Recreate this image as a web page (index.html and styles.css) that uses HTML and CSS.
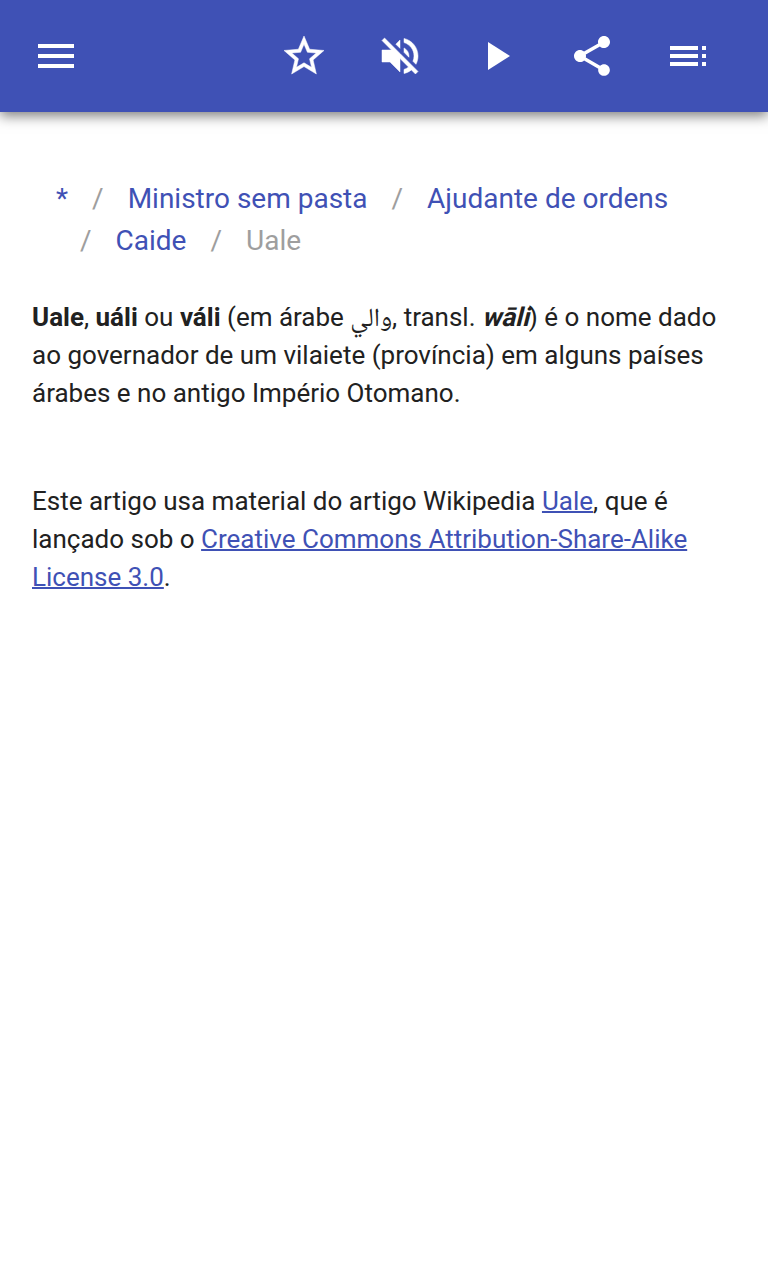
FILE: index.html
```html
<!DOCTYPE html>
<html lang="pt">
<head>
  <meta charset="UTF-8" />
  <title>Uale</title>
  <link rel="stylesheet" href="styles.css">
</head>
<body>
  <header class="toolbar">
    <button class="icon-btn" aria-label="Menu">
      <svg viewBox="0 0 24 24"><path d="M3 18h18v-2H3v2zm0-5h18v-2H3v2zm0-7v2h18V6H3z"/></svg>
    </button>
    <span class="spacer"></span>
    <button class="icon-btn heavy" aria-label="Favorito">
      <svg viewBox="0 0 24 24"><path d="M22 9.24l-7.19-.62L12 2 9.19 8.63 2 9.24l5.46 4.73L5.82 21 12 17.27 18.18 21l-1.63-7.03L22 9.24zM12 15.4l-3.76 2.27 1-4.28-3.32-2.88 4.38-.38L12 6.1l1.71 4.04 4.38.38-3.32 2.88 1 4.28L12 15.4z"/></svg>
    </button>
    <button class="icon-btn heavy" aria-label="Som">
      <svg viewBox="0 0 24 24"><path d="M16.5 12c0-1.77-1.02-3.29-2.5-4.03v2.21l2.45 2.45c.03-.2.05-.41.05-.63zm2.5 0c0 .94-.2 1.82-.54 2.64l1.51 1.51C20.63 14.91 21 13.5 21 12c0-4.28-2.99-7.86-7-8.77v2.06c2.89.86 5 3.54 5 6.71zM4.27 3L3 4.27 7.73 9H3v6h4l5 5v-6.73l4.25 4.25c-.67.52-1.42.93-2.25 1.18v2.06c1.38-.31 2.63-.95 3.69-1.81L19.73 21 21 19.73l-9-9L4.27 3zM12 4L9.91 6.09 12 8.18V4z"/></svg>
    </button>
    <button class="icon-btn" aria-label="Reproduzir">
      <svg viewBox="0 0 24 24"><path d="M8 5v14l11-7z"/></svg>
    </button>
    <button class="icon-btn" aria-label="Compartilhar">
      <svg viewBox="0 0 24 24"><path d="M18 16.08c-.76 0-1.44.3-1.96.77L8.91 12.7c.05-.23.09-.46.09-.7s-.04-.47-.09-.7l7.05-4.11c.54.5 1.25.81 2.04.81 1.66 0 3-1.34 3-3s-1.34-3-3-3-3 1.34-3 3c0 .24.04.47.09.7L8.04 9.81C7.5 9.31 6.79 9 6 9c-1.66 0-3 1.34-3 3s1.34 3 3 3c.79 0 1.5-.31 2.04-.81l7.12 4.16c-.05.21-.08.43-.08.65 0 1.61 1.31 2.92 2.92 2.92s2.92-1.31 2.92-2.92-1.31-2.92-2.92-2.92z"/></svg>
    </button>
    <button class="icon-btn" aria-label="Conteúdo">
      <svg viewBox="0 0 24 24"><path d="M3 9h14V7H3v2zm0 4h14v-2H3v2zm0 4h14v-2H3v2zm16 0h2v-2h-2v2zm0-10v2h2V7h-2zm0 6h2v-2h-2v2z"/></svg>
    </button>
  </header>

  <main class="content">
    <ul class="breadcrumb">
      <li><a href="#">*</a></li>
      <li><a href="#">Ministro sem pasta</a></li>
      <li><a href="#">Ajudante de ordens</a></li>
      <li><a href="#">Caide</a></li>
      <li class="active">Uale</li>
    </ul>

    <p class="article"><b>Uale</b>, <b>uáli</b> ou <b>váli</b> (em árabe <span class="arabic" lang="ar">والي</span>, transl. <b class="slanted">wāli</b>) é o nome dado ao governador de um vilaiete (província) em alguns países árabes e no antigo Império Otomano.</p>

    <p class="license">Este artigo usa material do artigo Wikipedia <a href="#">Uale</a>, que é lançado sob o <a href="#">Creative Commons Attribution-Share-Alike License 3.0</a>.</p>
  </main>
</body>
</html>
```

FILE: styles.css
```css
body {
  margin: 0;
  background: #fff;
  color: #212121;
  font-family: Roboto, sans-serif;
  font-size: 26px;
  line-height: 38px;
}
a {
  color: #3f51b5;
}
.toolbar {
  display: flex;
  align-items: center;
  height: 112px;
  padding: 0 32px;
  background: #3f51b5;
  box-shadow: 0 4px 12px rgba(0,0,0,0.5);
}
.spacer {
  flex: 1;
}
.icon-btn {
  width: 48px;
  height: 48px;
  padding: 0;
  border: none;
  background: none;
  cursor: pointer;
}
.icon-btn + .icon-btn {
  margin-left: 48px;
}
.icon-btn:last-child {
  margin-right: 24px;
}
.icon-btn svg {
  display: block;
  width: 48px;
  height: 48px;
  fill: #fff;
}
.heavy svg {
  stroke: #fff;
  stroke-width: 0.25;
}
.content {
  padding: 66px 32px 0;
}
.breadcrumb {
  display: flex;
  flex-wrap: wrap;
  margin: 0;
  padding: 0 24px;
  list-style: none;
  font-size: 28px;
  line-height: 42px;
}
.breadcrumb li + li::before {
  content: "/";
  padding: 0 24px;
  color: #9e9e9e;
}
.breadcrumb a {
  text-decoration: none;
}
.breadcrumb .active {
  color: #9e9e9e;
}
.article {
  margin: 36px 0 0;
}
.arabic {
  font-family: "Noto Naskh Arabic", "DejaVu Sans", sans-serif;
  line-height: 1;
}
.slanted {
  display: inline-block;
  transform: skewX(-14deg);
  transform-origin: 0 28px;
}
.license {
  margin: 70px 0 0;
}
.license a {
  text-decoration-thickness: 2px;
}
```
